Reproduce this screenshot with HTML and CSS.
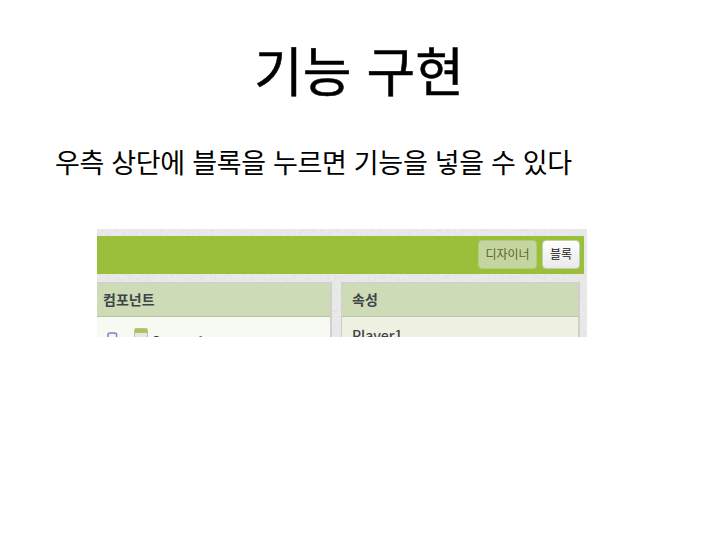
FILE: index.html
```
<!DOCTYPE html>
<html lang="ko">

<head>
    <meta charset="UTF-8">
    <meta name="viewport" content="width=device-width, initial-scale=1.0">
    <title>기능 구현</title>
    <link rel="stylesheet" href="styles.css">
</head>

<body>
    <h1>기능 구현</h1>
    <p class="description">우측 상단에 블록을 누르면 기능을 넣을 수 있다</p>
    <div class="editor">
        <svg class="texture" width="490" height="109">
            <filter id="paper">
                <feTurbulence type="fractalNoise" baseFrequency="0.3" numOctaves="3" />
                <feColorMatrix values="0 0 0 0 0.5  0 0 0 0 0.5  0 0 0 0 0.5  0.4 0 0 0 -0.16" />
            </filter>
            <rect width="490" height="109" filter="url(#paper)" />
        </svg>
        <div class="toolbar">
            <button class="designer">디자이너</button>
            <button class="blocks">블록</button>
        </div>
        <div class="panels">
            <div class="panel components">
                <h3>컴포넌트</h3>
                <div class="tree-row">
                    <svg class="toggle" width="11" height="11" viewBox="0 0 11 11">
                        <rect x="1" y="1" width="8.6" height="9" rx="2" fill="#f3f4fc" stroke="#7784bd" stroke-width="1.5" />
                        <path d="M3 5.5h5" stroke="#7784bd" />
                    </svg>
                    <svg class="screen-icon" width="14" height="16" viewBox="0 0 14 16">
                        <rect x="0.5" y="0.5" width="13" height="15" rx="1" fill="#e6e8e3" stroke="#babdb3" />
                        <rect x="1" y="1" width="12" height="4" fill="#adc653" />
                    </svg>
                    <span>Screen1</span>
                </div>
            </div>
            <div class="panel properties">
                <h3>속성</h3>
                <div class="selected">Player1</div>
            </div>
        </div>
    </div>
</body>

</html>
```

FILE: styles.css
```
body {
    font-family: "Noto Sans CJK KR", sans-serif;
    margin: 0;
    padding: 0;
    background-color: #fff;
    color: #000;
    overflow: hidden;
}

h1 {
    margin: 0;
    padding: 30px 2px 2px 0;
    text-align: center;
    font-size: 53px;
    font-weight: 400;
    line-height: 78px;
    -webkit-text-stroke: 0.5px #000;
}

.description {
    margin: 0;
    padding: 32px 0 0 55px;
    font-size: 27px;
    font-weight: 400;
    letter-spacing: -0.31px;
    line-height: 40px;
    white-space: nowrap;
}

.editor {
    position: relative;
    width: 490px;
    height: 108px;
    margin: 47px 0 0 97px;
    background-color: #eaeaea;
    overflow: hidden;
}

.texture {
    position: absolute;
    top: 0;
    left: 0;
}

.toolbar {
    position: relative;
    display: flex;
    justify-content: flex-end;
    align-items: center;
    gap: 5px;
    box-sizing: border-box;
    width: 487px;
    height: 38px;
    margin-top: 7px;
    padding: 0 4px 1px 0;
    background-color: #9abf3a;
}

.toolbar button {
    box-sizing: border-box;
    height: 29px;
    padding: 0 0 1px;
    border: 1px solid #c4cfa9;
    border-radius: 4px;
    font-family: inherit;
    font-size: 12px;
    line-height: 24px;
}

.toolbar .designer {
    width: 59px;
    background-color: #c5d5a0;
    border-color: #b3ca80;
    color: #55652c;
}

.toolbar .blocks {
    width: 38px;
    background: linear-gradient(#fff, #e9e9ec);
    color: #222;
}

.panels {
    position: relative;
    display: flex;
    gap: 9px;
    margin-top: 8px;
}

.panel {
    box-sizing: border-box;
    height: 90px;
    border: 1px solid #cfcfcf;
    border-right-width: 2px;
}

.panel h3 {
    box-sizing: border-box;
    height: 34px;
    margin: 0;
    border-bottom: 1px solid #b9c3a8;
    background-color: #cddbb6;
    color: #3f434a;
    font-size: 14px;
    font-weight: 700;
    line-height: 32px;
}

.components {
    width: 235px;
    border-left: none;
    background-color: #f7faf3;
}

.components h3 {
    padding-left: 6px;
}

.tree-row {
    display: flex;
    align-items: flex-start;
    padding: 11px 0 0 10px;
    color: #333;
    font-family: Roboto, sans-serif;
    font-size: 14.5px;
    line-height: 18px;
}

.toggle {
    margin-top: 4px;
}

.screen-icon {
    margin-left: 16px;
}

.tree-row span {
    margin: 6px 0 0 4px;
}

.properties {
    width: 239px;
    background-color: #eef1e2;
}

.properties h3 {
    padding-left: 10px;
}

.selected {
    padding: 8px 0 0 10px;
    color: #3f434a;
    font-family: "Noto Sans CJK KR", sans-serif;
    font-size: 14px;
    font-weight: 500;
    line-height: 20px;
}
```
